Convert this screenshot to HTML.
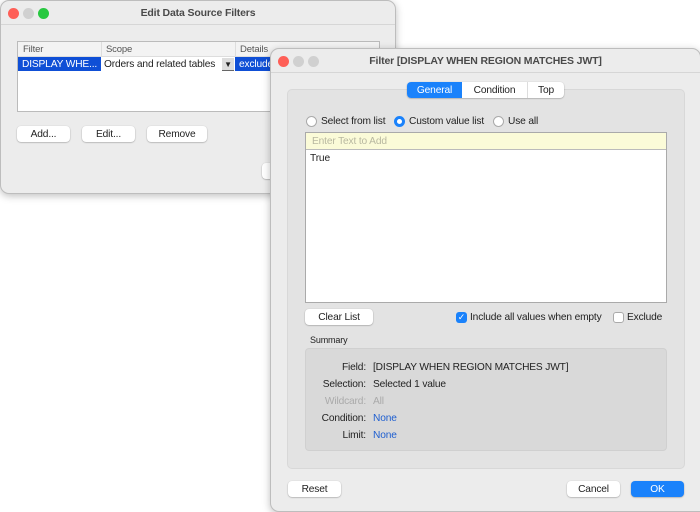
<!DOCTYPE html>
<html><head><meta charset="utf-8"><style>
*{box-sizing:border-box;margin:0;padding:0;white-space:nowrap}
body{width:700px;height:511px;background:#fff;position:relative;overflow:hidden;font-family:"Liberation Sans",sans-serif;font-size:10.2px;letter-spacing:-0.15px;color:#222}
.abs{position:absolute}
.win{position:absolute;background:#ececec;border:1px solid #bdbdbd;border-radius:9px;overflow:hidden;box-shadow:0 2px 8px rgba(0,0,0,.25)}
.tb{position:absolute;left:0;right:0;top:0;height:24px;border-bottom:1px solid #d6d6d6;text-align:center;font-weight:bold;color:#4a4a4a;font-size:10.5px;line-height:25px}
.dot{position:absolute;width:11px;height:11px;border-radius:50%;top:7px}
.btn{position:absolute;height:16px;background:#fff;border-radius:4px;box-shadow:0 0.5px 1.5px rgba(0,0,0,.35);text-align:center;line-height:17px;color:#222}
.radio{position:absolute;width:11px;height:11px;border-radius:50%;border:1px solid #aaa;background:#fff}
.lbl{position:absolute;width:60px;text-align:right;left:0}
</style></head><body>

<div class="win" style="left:0;top:0;width:396px;height:194px">
  <div class="tb">Edit Data Source Filters</div>
  <div class="dot" style="left:7px;background:#fe5f57"></div>
  <div class="dot" style="left:22px;background:#d0d0d0"></div>
  <div class="dot" style="left:37px;background:#28c840"></div>
  <div class="abs" style="left:16px;top:40px;width:363px;height:71px;background:#fff;border:1px solid #bbb;overflow:hidden">
    <div class="abs" style="left:0;top:0;width:361px;height:15px;background:#f3f3f3;border-bottom:1px solid #ddd;color:#555;font-size:9.5px;line-height:15px">
      <span class="abs" style="left:5px">Filter</span>
      <span class="abs" style="left:83px;top:0;height:15px;border-left:1px solid #ddd;padding-left:4px">Scope</span>
      <span class="abs" style="left:217px;top:0;height:15px;border-left:1px solid #ddd;padding-left:4px">Details</span>
    </div>
    <div class="abs" style="left:0;top:15px;width:83px;height:14px;background:#0f4fd6;color:#fff;line-height:15px;padding-left:4px;overflow:hidden">DISPLAY WHE...</div>
    <div class="abs" style="left:86px;top:15px;line-height:15px">Orders and related tables</div>
    <div class="abs" style="left:204px;top:16px;width:12px;height:13px;background:#ddd;border-bottom:1px solid #666;font-size:8px;text-align:center;line-height:13px">▼</div>
    <div class="abs" style="left:217px;top:15px;width:60px;height:14px;background:#0f4fd6;color:#fff;line-height:15px;padding-left:4px">exclude</div>
  </div>
  <div class="btn" style="left:16px;top:125px;width:53px">Add...</div>
  <div class="btn" style="left:81px;top:125px;width:53px">Edit...</div>
  <div class="btn" style="left:146px;top:125px;width:60px">Remove</div>
  <div class="btn" style="left:261px;top:162px;width:40px"></div>
</div>

<div class="win" style="left:270px;top:48px;width:431px;height:464px;border-radius:9px 9px 0 9px">
  <div class="tb">Filter [DISPLAY WHEN REGION MATCHES JWT]</div>
  <div class="dot" style="left:7px;background:#fe5f57"></div>
  <div class="dot" style="left:22px;background:#d0d0d0"></div>
  <div class="dot" style="left:37px;background:#d0d0d0"></div>
  <div class="abs" style="left:16px;top:40px;width:398px;height:380px;background:#e3e3e3;border:1px solid #d8d8d8;border-radius:5px"></div>
  <div class="abs" style="left:136px;top:33px;width:157px;height:16px;background:#fff;border-radius:4px;box-shadow:0 0.5px 1.5px rgba(0,0,0,.35);line-height:17px">
    <div class="abs" style="left:0;width:55px;height:16px;background:#1a82fb;color:#fff;text-align:center;border-radius:4px 0 0 4px">General</div>
    <div class="abs" style="left:55px;width:66px;text-align:center;border-right:1px solid #ddd;height:16px">Condition</div>
    <div class="abs" style="left:121px;width:36px;text-align:center">Top</div>
  </div>
  <div class="radio" style="left:35px;top:67px"></div>
  <div class="abs" style="left:50px;top:67px">Select from list</div>
  <div class="radio" style="left:123px;top:67px;border:3.5px solid #1a82fb"></div>
  <div class="abs" style="left:138px;top:67px">Custom value list</div>
  <div class="radio" style="left:222px;top:67px"></div>
  <div class="abs" style="left:237px;top:67px">Use all</div>
  <div class="abs" style="left:34px;top:83px;width:362px;height:171px;background:#fff;border:1px solid #aaa">
    <div class="abs" style="left:0;top:0;width:360px;height:17px;background:#fbfbd8;border-bottom:1px solid #bbb;color:#b8b8a0;padding-left:6px;line-height:17px">Enter Text to Add</div>
    <div class="abs" style="left:4px;top:19px;line-height:14px">True</div>
  </div>
  <div class="btn" style="left:34px;top:260px;width:68px">Clear List</div>
  <div class="abs" style="left:185px;top:263px;width:11px;height:11px;background:#1a82fb;border-radius:3px;color:#fff;font-size:9px;line-height:11px;text-align:center">✓</div>
  <div class="abs" style="left:199px;top:263px">Include all values when empty</div>
  <div class="abs" style="left:342px;top:263px;width:11px;height:11px;background:#fff;border:1px solid #aaa;border-radius:3px"></div>
  <div class="abs" style="left:356px;top:263px">Exclude</div>
  <div class="abs" style="left:39px;top:286px;font-size:9px">Summary</div>
  <div class="abs" style="left:34px;top:299px;width:362px;height:103px;background:#d9d9d9;border:1px solid #d0d0d0;border-radius:4px">
    <div class="abs" style="left:0;top:13px;width:362px;height:80px">
      <div class="lbl" style="top:0">Field:</div><div class="abs" style="left:67px;top:0">[DISPLAY WHEN REGION MATCHES JWT]</div>
      <div class="lbl" style="top:17px">Selection:</div><div class="abs" style="left:67px;top:17px">Selected 1 value</div>
      <div class="lbl" style="top:34px;color:#aaa">Wildcard:</div><div class="abs" style="left:67px;top:34px;color:#aaa">All</div>
      <div class="lbl" style="top:51px">Condition:</div><div class="abs" style="left:67px;top:51px;color:#1f5fd0">None</div>
      <div class="lbl" style="top:68px">Limit:</div><div class="abs" style="left:67px;top:68px;color:#1f5fd0">None</div>
    </div>
  </div>
  <div class="btn" style="left:17px;top:432px;width:53px">Reset</div>
  <div class="btn" style="left:296px;top:432px;width:53px">Cancel</div>
  <div class="btn" style="left:360px;top:432px;width:53px;background:#1a82fb;color:#fff">OK</div>
</div>
</body></html>
